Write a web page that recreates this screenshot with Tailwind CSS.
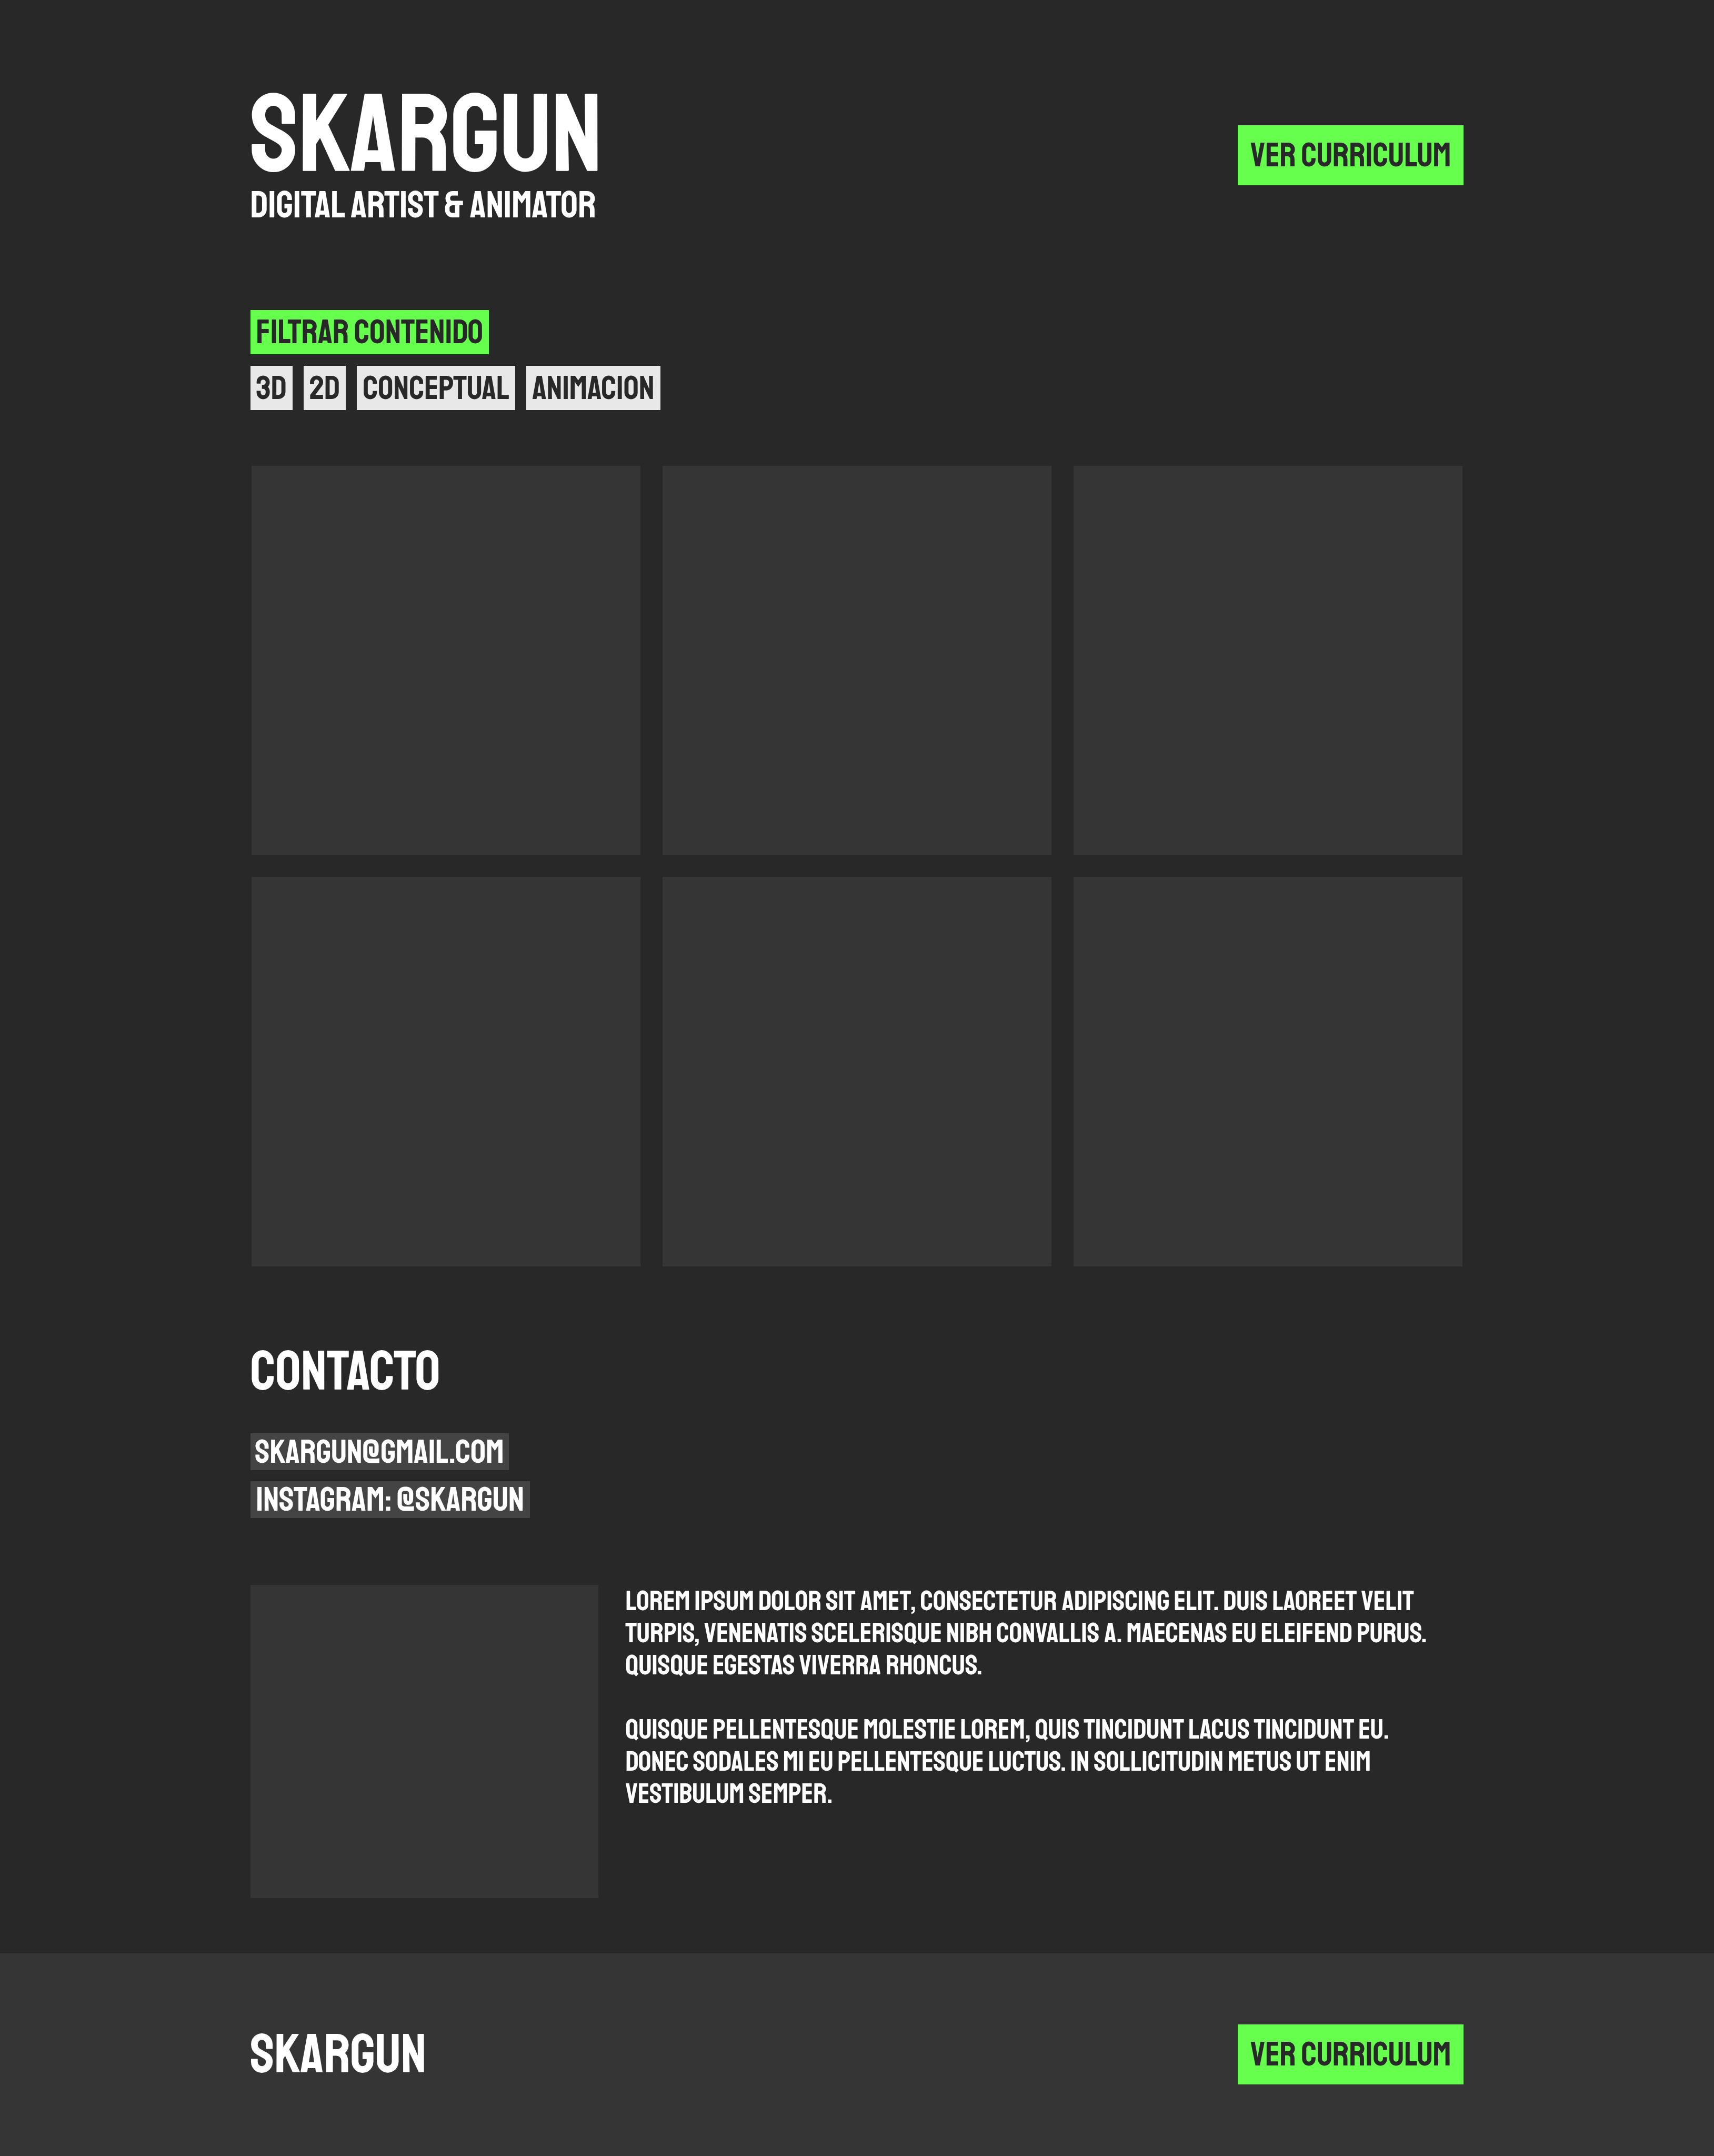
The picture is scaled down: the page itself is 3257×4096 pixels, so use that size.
<!DOCTYPE html>
<html lang="es">
<head>
<meta charset="utf-8">
<meta name="viewport" content="width=device-width, initial-scale=1">
<title>Skargun</title>
<script src="https://cdn.jsdelivr.net/npm/@tailwindcss/browser@4"></script>
</head>
<body class="min-h-screen flex flex-col bg-[#282828] text-white uppercase font-['Staatliches','Bebas_Neue','Liberation_Sans',sans-serif]">
  <header class="px-[14.6%] pt-[161px] flex items-center justify-between">
    <div>
      <h1 class="text-[210px] leading-[192px]">Skargun</h1>
      <p class="text-[72px] leading-[75px]">Digital artist &amp; animator</p>
    </div>
    <a href="#" class="bg-[#66ff4d] text-[#282828] text-[65px] leading-[114px] px-[24px]">Ver curriculum</a>
  </header>

  <main class="px-[14.6%] pt-[161px] pb-[105px]">
    <section class="flex flex-col items-start gap-[22px]">
      <h2 class="bg-[#66ff4d] text-[#282828] text-[65px] leading-[84px] px-[11px]">Filtrar contenido</h2>
      <div class="flex flex-wrap gap-[21px] text-[#282828] text-[64px] leading-[84px]">
        <button type="button" class="bg-[#e8e8e8] px-[11px] uppercase">3D</button>
        <button type="button" class="bg-[#e8e8e8] px-[11px] uppercase">2D</button>
        <button type="button" class="bg-[#e8e8e8] px-[11px] uppercase">Conceptual</button>
        <button type="button" class="bg-[#e8e8e8] px-[11px] uppercase">Animacion</button>
      </div>
    </section>

    <section class="mt-[106px] px-[2px] grid grid-cols-3 gap-[42px]">
      <div class="aspect-square bg-[#353535]"></div>
      <div class="aspect-square bg-[#353535]"></div>
      <div class="aspect-square bg-[#353535]"></div>
      <div class="aspect-square bg-[#353535]"></div>
      <div class="aspect-square bg-[#353535]"></div>
      <div class="aspect-square bg-[#353535]"></div>
    </section>

    <section class="mt-[147px] flex flex-col items-start">
      <h2 class="text-[106px] leading-[106px]">Contacto</h2>
      <div class="mt-[64px] flex flex-col items-start gap-[21px] leading-[70px]">
        <a href="mailto:skargun@gmail.com" class="bg-[#444444] text-[64px] px-[9px]">Skargun@gmail.com</a>
        <a href="#" class="bg-[#444444] text-[65px] px-[11px]">Instagram: @skargun</a>
      </div>
    </section>

    <section class="mt-[127px] grid grid-cols-[661px_1fr] gap-[52px]">
      <div class="h-[595px] bg-[#353535]"></div>
      <div class="pr-[42px] flex flex-col gap-[61px] text-[54px] leading-[61px]">
        <p>Lorem ipsum dolor sit amet, consectetur adipiscing elit. Duis laoreet velit turpis, venenatis scelerisque nibh convallis a. Maecenas eu eleifend purus. Quisque egestas viverra rhoncus.</p>
        <p>Quisque pellentesque molestie lorem, quis tincidunt lacus tincidunt eu. Donec sodales mi eu pellentesque luctus. In sollicitudin metus ut enim vestibulum semper.</p>
      </div>
    </section>
  </main>

  <footer class="grow px-[14.6%] py-[135px] bg-[#353535] flex items-center justify-between">
    <p class="text-[105px] leading-[106px]">Skargun</p>
    <a href="#" class="bg-[#66ff4d] text-[#282828] text-[65px] leading-[114px] px-[24px]">Ver curriculum</a>
  </footer>
</body>
</html>
